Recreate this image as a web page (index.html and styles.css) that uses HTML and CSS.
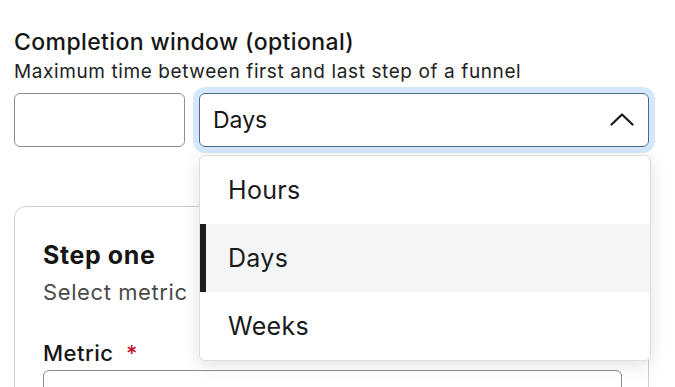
FILE: index.html
```html
<!DOCTYPE html>
<html>
<head>
    <meta charset="UTF-8">
    <title>Completion window</title>
    <link rel="stylesheet" href="styles.css">
</head>
<body>
    <div class="container">
        <div class="field-head">
            <div class="field-title">Completion window (optional)</div>
            <div class="field-desc">Maximum time between first and last step of a funnel</div>
        </div>

        <div class="window-row">
            <input class="form-input" type="text">
            <div class="select-wrap">
                <div class="select is-open">
                    <span>Days</span>
                    <svg class="chevron" width="24" height="13" viewBox="0 0 24 13">
                        <path d="M1.5 11.5 L12 1.5 L22.5 11.5" fill="none" stroke="#1a1a1a" stroke-width="2.2" stroke-linecap="round" stroke-linejoin="round"/>
                    </svg>
                </div>
                <ul class="menu">
                    <li class="menu-item">Hours</li>
                    <li class="menu-item selected">Days</li>
                    <li class="menu-item">Weeks</li>
                </ul>
            </div>
        </div>

        <div class="card">
            <div class="card-title">Step one</div>
            <div class="card-desc">Select metric</div>
            <div class="card-label">Metric <span class="required">*</span></div>
            <div class="card-input"></div>
        </div>
    </div>
</body>
</html>
```

FILE: styles.css
```css
body {
    margin: 0;
    font-family: Inter, "Noto Sans", sans-serif;
    color: #161616;
    background: #fff;
    overflow: hidden;
}

.container {
    width: 635px;
    padding: 28px 0 0 14px;
}

.field-title {
    font-size: 23px;
    font-weight: 500;
    line-height: 28px;
    letter-spacing: 0.4px;
}

.field-desc {
    font-size: 19px;
    line-height: 24px;
    letter-spacing: 0.6px;
    margin-top: 4px;
    color: #222;
}

.window-row {
    display: flex;
    gap: 14px;
    margin-top: 9px;
}

.form-input {
    box-sizing: border-box;
    width: 171px;
    height: 54px;
    margin: 0;
    border: 1px solid #8d8d8d;
    border-radius: 6px;
}

.select-wrap {
    position: relative;
    flex: 1;
}

.select {
    box-sizing: border-box;
    height: 54px;
    display: flex;
    align-items: center;
    justify-content: space-between;
    padding: 0 14px 0 13px;
    border: 1px solid #4a6a8a;
    border-radius: 6px;
    font-size: 23px;
}

.select.is-open {
    box-shadow: 0 0 0 6px #d5e8fb;
}

.chevron {
    margin-top: -1px;
}

.menu {
    position: absolute;
    top: 62px;
    left: 0;
    right: -2px;
    z-index: 2;
    margin: 0;
    padding: 0;
    list-style: none;
    background: #fff;
    border: 1px solid #dcdcdc;
    border-radius: 6px;
    box-shadow: 0 4px 18px rgba(0, 0, 0, 0.12);
}

.menu-item {
    height: 68px;
    line-height: 68px;
    padding-left: 28px;
    font-size: 25px;
    letter-spacing: 0.3px;
    color: #1a1a1a;
}

.menu-item.selected {
    background: #f4f5f7;
    box-shadow: inset 6px 0 0 #1c1c1c;
}

.card {
    margin-top: 59px;
    height: 240px;
    padding: 33px 28px 0;
    border: 1px solid #cfcfcf;
    border-radius: 12px;
}

.card-title {
    font-size: 25px;
    font-weight: 700;
    line-height: 30px;
    letter-spacing: 0.6px;
}

.card-desc {
    font-size: 22px;
    line-height: 28px;
    letter-spacing: 0.6px;
    margin-top: 8px;
    color: #4a4a4a;
}

.card-label {
    font-size: 22px;
    font-weight: 500;
    line-height: 28px;
    letter-spacing: 0.5px;
    margin-top: 33px;
}

.required {
    color: #c8102e;
    margin-left: 6px;
}

.card-input {
    height: 50px;
    margin-top: 3px;
    width: 577px;
    border: 1px solid #8d8d8d;
    border-radius: 6px;
}
```
